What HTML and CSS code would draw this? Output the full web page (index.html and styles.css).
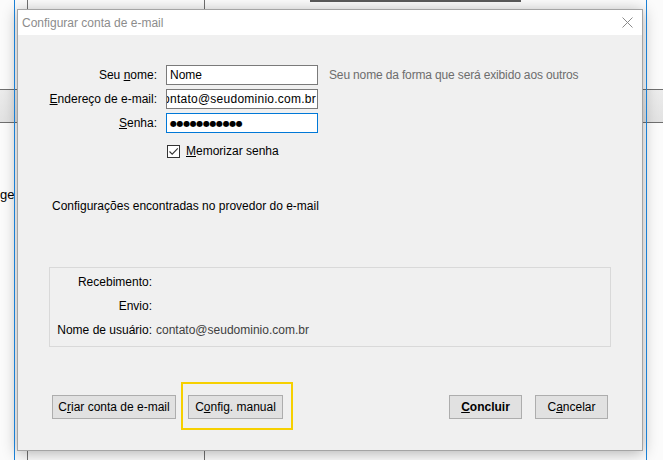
FILE: index.html
```html
<!DOCTYPE html>
<html lang="pt-BR">
<head>
    <meta charset="UTF-8">
    <meta name="viewport" content="width=device-width, initial-scale=1.0">
    <title>Configurar conta de e-mail</title>
    <link rel="stylesheet" href="styles.css">
</head>
<body>
    <div class="desktop">
        <!-- janela principal por trás do diálogo -->
        <div class="bg-topline"></div>
        <div class="bg-toolbar"></div>
        <div class="bg-split bg-split-a"></div>
        <div class="bg-split bg-split-b"></div>
        <span class="bg-text">ge</span>
        <div class="frame-line frame-left"></div>
        <div class="frame-line frame-right"></div>

        <div class="dialog">
            <div class="titlebar">
                <span class="title">Configurar conta de e-mail</span>
                <svg class="close" width="11" height="11" viewBox="0 0 11 11">
                    <path d="M0.5 0.5 L10.5 10.5 M10.5 0.5 L0.5 10.5" stroke="#8a8a8a" stroke-width="1" fill="none"/>
                </svg>
            </div>

            <div class="content">
                <div class="form">
                    <label class="form-label">Seu <u>n</u>ome:</label>
                    <div class="field"><span>Nome</span></div>
                    <span class="hint">Seu nome da forma que será exibido aos outros</span>

                    <label class="form-label"><u>E</u>ndereço de e-mail:</label>
                    <div class="field field-scrolled"><span>contato@seudominio.com.br</span></div>
                    <span></span>

                    <label class="form-label"><u>S</u>enha:</label>
                    <div class="field field-focus"><span class="dots">●●●●●●●●●●●</span></div>
                    <span></span>

                    <div class="check-row">
                        <span class="checkbox">
                            <svg width="11" height="11" viewBox="0 0 11 11">
                                <path d="M1.5 5.5 L4.2 8.2 L9.8 2.3" stroke="#333" stroke-width="1.1" fill="none"/>
                            </svg>
                        </span>
                        <span><u>M</u>emorizar senha</span>
                    </div>
                </div>

                <div class="status">Configurações encontradas no provedor do e-mail</div>

                <div class="summary">
                    <span class="summary-label">Recebimento:</span>
                    <span class="summary-value"></span>
                    <span class="summary-label">Envio:</span>
                    <span class="summary-value"></span>
                    <span class="summary-label">Nome de usuário:</span>
                    <span class="summary-value">contato@seudominio.com.br</span>
                </div>

                <div class="buttons">
                    <div class="button-group">
                        <button class="btn btn-create">C<u>r</u>iar conta de e-mail</button>
                        <span class="highlight-wrap">
                            <button class="btn btn-manual">C<u>o</u>nfig. manual</button>
                            <span class="highlight"></span>
                        </span>
                    </div>
                    <div class="button-group button-group-right">
                        <button class="btn btn-done"><u>C</u>oncluir</button>
                        <button class="btn btn-cancel">C<u>a</u>ncelar</button>
                    </div>
                </div>
            </div>
        </div>
    </div>
</body>
</html>
```

FILE: styles.css
```css
* {
    margin: 0;
    padding: 0;
    box-sizing: border-box;
}

body {
    width: 663px;
    height: 460px;
    overflow: hidden;
    background: #fbfbfb;
    font-family: 'Liberation Sans', Arial, sans-serif;
    font-size: 12px;
    color: #000;
}

.desktop {
    position: relative;
    width: 663px;
    height: 460px;
    overflow: hidden;
}

/* fundo: janela principal */
.bg-topline {
    position: absolute;
    left: 310px;
    top: 0;
    width: 211px;
    height: 2px;
    background: #5a5a5a;
}

.bg-toolbar {
    position: absolute;
    left: 0;
    top: 89px;
    width: 663px;
    height: 34px;
    border-top: 1px solid #6f6f6f;
    border-bottom: 1px solid #6f6f6f;
    background: linear-gradient(#ececec, #e2e2e2);
}

.bg-split {
    position: absolute;
    top: 0;
    width: 1px;
    height: 460px;
    background: #707070;
}

.bg-split-a {
    left: 27px;
}

.bg-split-b {
    left: 204px;
}

.bg-text {
    position: absolute;
    left: 0;
    top: 187px;
    font-size: 13px;
}

.frame-line {
    position: absolute;
    top: 0;
    width: 1px;
    height: 460px;
    background: #1a7fd4;
    z-index: 2;
}

.frame-left {
    left: 14px;
}

.frame-right {
    left: 646px;
}

/* diálogo */
.dialog {
    position: absolute;
    left: 17px;
    top: 9px;
    width: 626px;
    height: 442px;
    border: 1px solid #a4a4a4;
    background: #f0f0f0;
    box-shadow: 0 2px 14px rgba(0, 0, 0, 0.3);
    display: flex;
    flex-direction: column;
    z-index: 1;
}

.titlebar {
    height: 25px;
    background: #fff;
    display: flex;
    align-items: center;
    justify-content: space-between;
    padding: 0 9px 0 4px;
    color: #8c8c8c;
}

.close {
    display: block;
}

.content {
    flex: 1;
    padding: 30px 31px 0 31px;
}

.form {
    display: grid;
    grid-template-columns: 108px 152px auto;
    grid-auto-rows: 20px;
    column-gap: 9px;
    row-gap: 4px;
    align-items: center;
}

.form-label {
    text-align: right;
}

.field {
    height: 20px;
    border: 1px solid #7a7a7a;
    background: #fff;
    display: flex;
    align-items: center;
    padding: 0 3px;
    overflow: hidden;
    white-space: nowrap;
}

.field-scrolled {
    justify-content: flex-end;
    padding: 0 1px 0 0;
    letter-spacing: 0.25px;
}

.field-focus {
    border-color: #0078d7;
}

.dots {
    font-family: 'DejaVu Sans', sans-serif;
    font-size: 8px;
    letter-spacing: -0.4px;
}

.hint {
    margin-left: 2px;
    color: #6d6d6d;
    letter-spacing: -0.15px;
}

.check-row {
    grid-column: 2 / 4;
    display: flex;
    align-items: center;
    gap: 6px;
    margin-top: 8px;
    padding-left: 1px;
}

.checkbox {
    width: 13px;
    height: 13px;
    border: 1px solid #333;
    background: #fff;
    display: flex;
    align-items: center;
    justify-content: center;
}

.status {
    margin-top: 41px;
    padding-left: 3px;
    line-height: 16px;
}

.summary {
    margin-top: 53px;
    height: 80px;
    border: 1px solid #d9d9d9;
    display: grid;
    grid-template-columns: 102px 1fr;
    grid-auto-rows: 16px;
    column-gap: 4px;
    row-gap: 8px;
    padding-top: 7px;
}

.summary-label {
    text-align: right;
}

.summary-value {
    color: #404040;
}

.buttons {
    margin-top: 48px;
    display: flex;
    justify-content: space-between;
    padding: 0 3px;
}

.button-group {
    display: flex;
    gap: 12px;
}

.button-group-right {
    gap: 13px;
}

.btn {
    height: 24px;
    border: 1px solid #adadad;
    background: #e1e1e1;
    font-family: inherit;
    font-size: 12px;
    color: #000;
    padding: 0;
}

.btn-create {
    width: 124px;
}

.btn-manual {
    width: 95px;
}

.btn-done {
    width: 73px;
    font-weight: bold;
}

.btn-cancel {
    width: 73px;
}

.highlight-wrap {
    position: relative;
    display: flex;
}

.highlight {
    position: absolute;
    left: -7px;
    top: -13px;
    right: -10px;
    bottom: -11px;
    border: 2px solid #f6d000;
}
```
